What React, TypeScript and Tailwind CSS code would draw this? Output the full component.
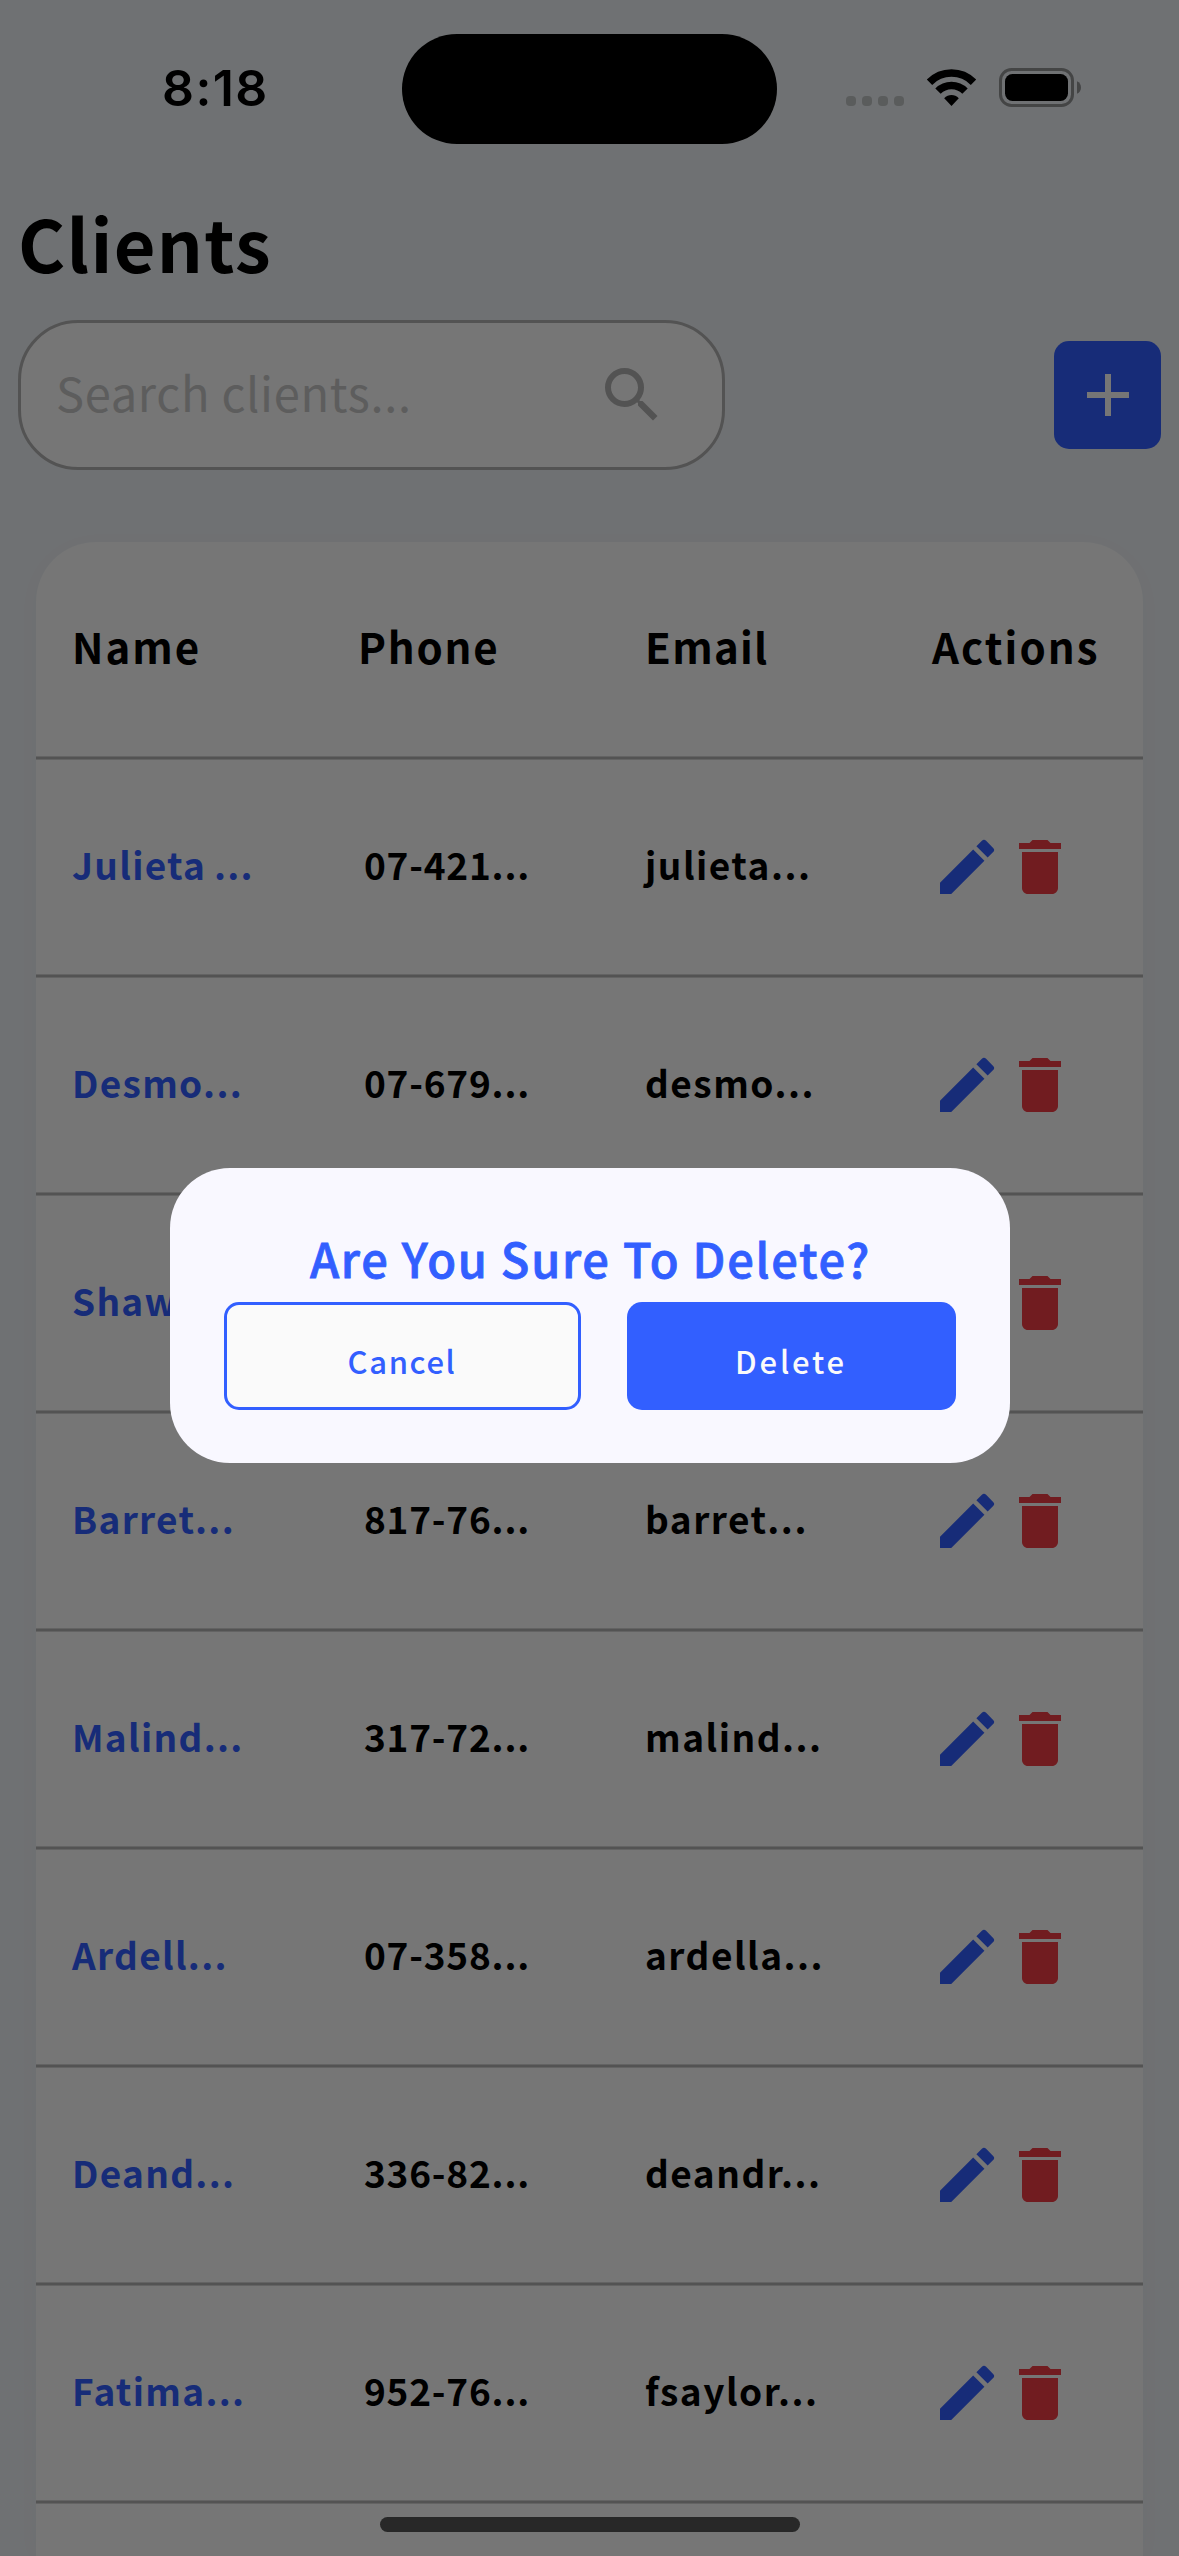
import { MdAdd, MdDelete, MdEdit, MdSearch } from "react-icons/md";

type Client = { name: string; phone: string; email: string };

const clients: Client[] = [
  { name: "Julieta ...", phone: "07-421...", email: "julieta..." },
  { name: "Desmo...", phone: "07-679...", email: "desmo..." },
  { name: "Shawn...", phone: "", email: "" },
  { name: "Barret...", phone: "817-76...", email: "barret..." },
  { name: "Malind...", phone: "317-72...", email: "malind..." },
  { name: "Ardell...", phone: "07-358...", email: "ardella..." },
  { name: "Deand...", phone: "336-82...", email: "deandr..." },
  { name: "Fatima...", phone: "952-76...", email: "fsaylor..." },
];

function StatusBar() {
  return (
    <div className="grid h-[177px] shrink-0 grid-cols-[402px_375px_402px] pt-[34px]">
      <div className="flex h-[110px] items-center pl-[162px] font-['Inter',sans-serif] text-[50px] font-semibold tracking-[1.4px] text-black">
        <span className="-mt-[2px]">8:18</span>
      </div>
      <div className="h-[110px] rounded-full bg-black" />
      <div className="flex h-[76px] items-end pb-1 pl-[69px]">
        <div className="flex gap-[6px]">
          {[0, 1, 2, 3].map((dot) => (
            <span key={dot} className="size-[10px] rounded-[4px] bg-[#bfc3c3]" />
          ))}
        </div>
        <svg className="ml-[22px] h-[37px] w-[51px]" viewBox="0 0 51 37" fill="none">
          <path d="M3.5 13.2a31 31 0 0 1 44 0" stroke="#000" strokeWidth="7.6" />
          <path d="M12 22.2a19 19 0 0 1 27 0" stroke="#000" strokeWidth="7.6" />
          <path d="M18.2 29.2c4.2-4.3 10.4-4.3 14.6 0l-7.3 7.8z" fill="#000" />
        </svg>
        <svg className="-mb-px ml-[22px] h-[39px] w-[82px]" viewBox="0 0 82 39" fill="none">
          <rect x="1.5" y="1.5" width="72" height="36" rx="11" stroke="#909294" strokeWidth="3" />
          <rect x="6" y="6" width="63" height="27" rx="7.5" fill="#000" />
          <path d="M78 13.2c5.3 2.2 5.3 10.4 0 12.6z" fill="#909294" />
        </svg>
      </div>
    </div>
  );
}

function Separator() {
  return <div className="h-1 shrink-0 border-y border-[#d2d2d2] bg-[#b0b0b0]" />;
}

function ClientRow({ client }: { client: Client }) {
  return (
    <>
      <div className="grid h-[214px] shrink-0 grid-cols-[286px_287px_286px_1fr] items-center pl-9 text-[37px] font-bold whitespace-nowrap text-black">
        <span className="pb-[5px] tracking-[1.3px] [word-spacing:-2px] text-[#325fff]">{client.name}</span>
        <span className="w-[178px] pb-[5px] text-center tracking-[0.8px]">{client.phone}</span>
        <span className="pb-[5px] tracking-[1.5px]">{client.email}</span>
        <div className="flex items-center gap-px">
          <MdEdit className="size-[72px] text-[#325fff]" />
          <MdDelete className="size-[72px] text-[#f03c44]" />
        </div>
      </div>
      <Separator />
    </>
  );
}

function ClientTable() {
  return (
    <div className="mx-9 mt-[72px] flex flex-1 flex-col overflow-hidden rounded-t-[60px] bg-[#fafafa] shadow-[0_4px_30px_rgba(0,0,0,0.02)]">
      <div className="grid h-[214px] shrink-0 grid-cols-[286px_287px_286px_1fr] items-center pl-9 text-[42px] font-bold whitespace-nowrap text-black">
        <span className="pb-[7px] tracking-[2px]">Name</span>
        <span className="pb-[7px] tracking-[1.8px]">Phone</span>
        <span className="pb-[7px] tracking-[1.3px]">Email</span>
        <span className="pb-[7px] pl-px tracking-[2.1px]">Actions</span>
      </div>
      <Separator />
      {clients.map((client) => (
        <ClientRow key={client.name} client={client} />
      ))}
    </div>
  );
}

function DeleteDialog() {
  return (
    <div className="absolute inset-0 flex items-start justify-center bg-black/53 pt-[1168px]">
      <div className="flex h-[295px] w-[840px] flex-col rounded-[60px] bg-[#f9f8ff] px-[54px] pt-[54px]">
        <h2 className="h-20 pl-0.5 text-center text-[47px] leading-[72px] font-medium tracking-[1.7px] text-[#325fff] [-webkit-text-stroke:0.8px_#325fff]">
          Are You Sure To Delete?
        </h2>
        <div className="flex justify-between text-[31px] leading-[108px] font-medium">
          <button className="flex h-[108px] w-[357px] items-center justify-center rounded-[15px] border-[3px] border-[#325fff] bg-[#fafafa] pt-[10px] tracking-[1.6px] text-[#325fff]">
            Cancel
          </button>
          <button className="flex h-[108px] w-[329px] items-center justify-center rounded-[15px] bg-[#325fff] pt-[10px] tracking-[2.8px] text-[#fafafa]">
            Delete
          </button>
        </div>
      </div>
    </div>
  );
}

export default function App() {
  return (
    <div className="relative flex h-[2556px] w-[1179px] flex-col overflow-hidden bg-[#ecf0f4] font-['Noto_Sans_CJK_JP','Noto_Sans',sans-serif]">
      <StatusBar />
      <h1 className="mt-[11px] h-[108px] pl-[18px] text-[72px] leading-[108px] font-bold tracking-[1.3px] text-black">
        Clients
      </h1>
      <div className="mt-6 flex h-[150px] shrink-0 items-center justify-between pr-[18px] pl-[18px]">
        <div className="flex h-[150px] w-[707px] items-center justify-between rounded-[60px] border-[3px] border-[#b0b0b0] bg-[#fafafa] pr-[54px] pl-[35px]">
          <span className="pb-[5px] text-[47px] tracking-[0.7px] whitespace-nowrap text-[#c5c5c5]">Search clients...</span>
          <MdSearch className="size-[72px] text-[#b0b0b0]" />
        </div>
        <button className="flex h-[108px] w-[107px] items-center justify-center rounded-[15px] bg-[#325fff]">
          <MdAdd className="size-[72px] shrink-0 text-[#fafafa]" />
        </button>
      </div>
      <ClientTable />
      <div className="absolute bottom-6 left-[380px] h-[15px] w-[420px] rounded-full bg-[#565656]" />
      <DeleteDialog />
    </div>
  );
}
